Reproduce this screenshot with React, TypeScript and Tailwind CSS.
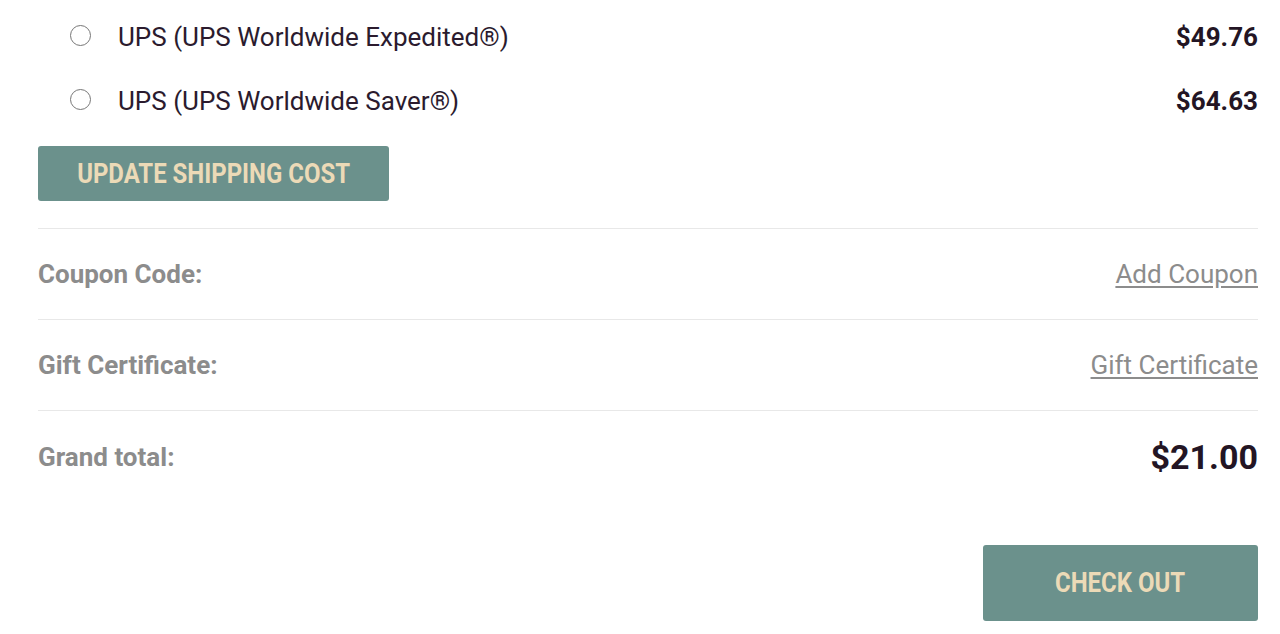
import { useState } from "react";

const options = [
  { id: "expedited", label: "UPS (UPS Worldwide Expedited®)", price: "$49.76" },
  { id: "saver", label: "UPS (UPS Worldwide Saver®)", price: "$64.63" },
];

export default function App() {
  const [selected, setSelected] = useState<string | null>(null);

  return (
    <div className="min-h-screen bg-white font-['Roboto',sans-serif] pt-[5px]">
      <div className="ml-[38px] w-[1220px]">
        {/* shipping options */}
        <ul>
          {options.map((o) => (
            <li key={o.id} className="flex h-[64px] items-center justify-between">
              <label className="flex items-center cursor-pointer">
                <span
                  onClick={() => setSelected(o.id)}
                  className="ml-[32px] mb-[4px] flex h-[21px] w-[21px] items-center justify-center rounded-full border border-[#767676] bg-white"
                >
                  {selected === o.id && <span className="h-[10px] w-[10px] rounded-full bg-[#2b1b2e]" />}
                </span>
                <span className="ml-[27px] text-[26px] text-[#2b1b2e]">{o.label}</span>
              </label>
              <span className="text-[26px] font-bold text-[#231524]">{o.price}</span>
            </li>
          ))}
        </ul>

        <button className="mt-[13px] flex h-[55px] w-[351px] items-center justify-center rounded-[3px] bg-[#6b918c]">
          <span className="inline-block scale-x-[0.855] text-[28px] font-bold text-[#ecdab7] whitespace-nowrap">
            UPDATE SHIPPING COST
          </span>
        </button>

        <div className="mt-[27px] border-t border-[#e8e8e8]">
          <div className="flex h-[91px] items-center justify-between border-b border-[#e8e8e8]">
            <span className="text-[26px] font-bold text-[#8c8c8c]">Coupon Code:</span>
            <a href="#" className="text-[26px] text-[#8c8c8c] underline underline-offset-[3px]">Add Coupon</a>
          </div>
          <div className="flex h-[91px] items-center justify-between border-b border-[#e8e8e8]">
            <span className="text-[26px] font-bold text-[#8c8c8c]">Gift Certificate:</span>
            <a href="#" className="text-[26px] text-[#8c8c8c] underline underline-offset-[3px]">Gift Certificate</a>
          </div>
          <div className="flex h-[92px] items-center justify-between">
            <span className="text-[26px] font-bold text-[#8c8c8c]">Grand total:</span>
            <span className="text-[34px] font-bold text-[#231524]">$21.00</span>
          </div>
        </div>

        <div className="mt-[42px] flex justify-end">
          <button className="flex h-[76px] w-[275px] items-center justify-center rounded-[3px] bg-[#6b918c]">
            <span className="inline-block scale-x-[0.855] text-[28px] font-bold text-[#ecdab7] whitespace-nowrap">
              CHECK OUT
            </span>
          </button>
        </div>
      </div>
    </div>
  );
}
